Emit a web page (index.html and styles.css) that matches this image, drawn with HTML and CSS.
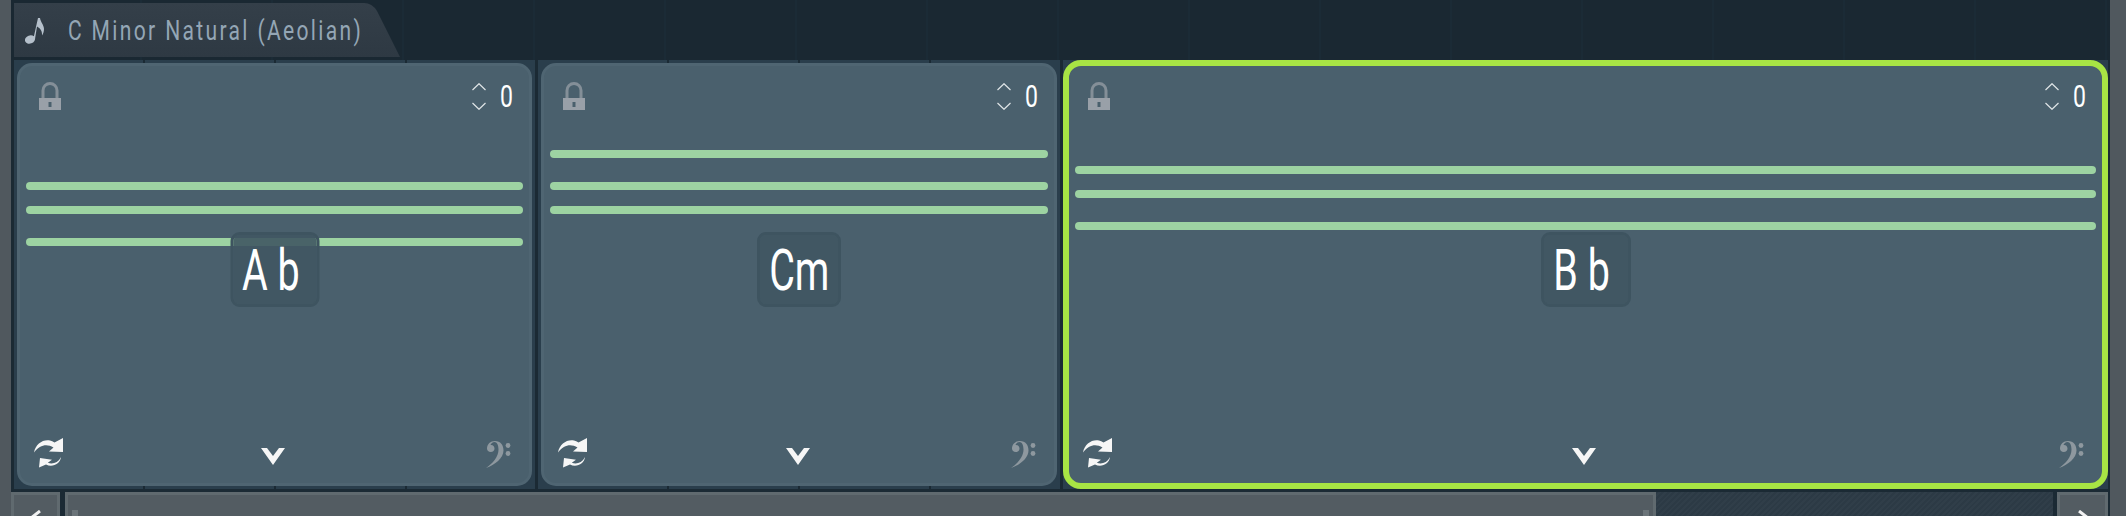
FILE: index.html
```html
<!DOCTYPE html>
<html lang="en">
<head>
<meta charset="utf-8">
<title>C Minor Natural (Aeolian)</title>
<link rel="stylesheet" href="styles.css">
</head>
<body>
<svg class="defs" width="0" height="0" aria-hidden="true">
  <defs>
    <symbol id="lock" viewBox="0 0 22 29">
      <path d="M4 18V9.500a7 7 0 0 1 14 0V18" fill="none" stroke="#848f98" stroke-width="3"/>
      <path d="M0 17H22V29H0ZM9.500 21V26H12.500V21Z" fill="#99a0a8" fill-rule="evenodd"/>
    </symbol>
    <symbol id="updown" viewBox="0 0 14 27">
      <path d="M0.500 7 7 0.700 13.500 7M0.500 20 7 26.300 13.500 20" fill="none" stroke="#dfe4e6" stroke-width="1.200"/>
    </symbol>
    <symbol id="refresh" viewBox="0 0 30 30">
      <path d="M0 14.500C1.500 6 9 1 16 2.500 17.500 2.800 19 3.500 20.500 4.500L29 0V14L15 13.500 19.500 9.500C13 5.500 6 6.500 0 14.500Z" fill="#f6f6f6"/>
      <path d="M27 19C26.500 25.500 18.500 30 12 26.500L5 29.500 6 20 18 21.800 13.800 24.800C18.500 26.500 24 25 27 19Z" fill="#f6f6f6"/>
    </symbol>
    <symbol id="chevron" viewBox="0 0 24 17">
      <path d="M0 0H6L12 8 18 0H24L12 17Z" fill="#f6f6f6"/>
    </symbol>
    <symbol id="clef" viewBox="0 0 25 27">
      <path d="M1 7.500C1 3 4.500 0 9 0 14.500 0 17.500 4 17.500 9.500 17.500 17 9 24 0 27 6.500 22.500 12.500 16 12.500 8.500 12.500 4 11 1 8.500 1 6.500 1 5 2.500 4.500 4 6.800 3.600 8.500 5.300 8.500 7.500 8.500 9.600 7 11 4.800 11 2.600 11 1 9.600 1 7.500Z" fill="#8e989f"/>
      <circle cx="22" cy="4.500" r="2.400" fill="#8e989f"/>
      <circle cx="22" cy="12.500" r="2.400" fill="#8e989f"/>
    </symbol>
  </defs>
</svg>
<div class="app">
  <header class="header">
    <div class="tab">
      <svg class="note" width="20" height="26" viewBox="0 0 20 26" aria-hidden="true">
        <ellipse cx="5" cy="21.500" rx="5.200" ry="4" transform="rotate(-20 5 21.500)" fill="#b5c0cb"/>
        <path d="M8.500 20 13 0H15C15.500 4 19 7 19 11 19 14 18 16 17 17.500 17.500 13 15 10 12 8.500L10 21Z" fill="#b5c0cb"/>
      </svg>
      <span class="tab-title">C Minor Natural (Aeolian)</span>
    </div>
  </header>
  <main class="bars">
    <section class="bar bar-first">
      <article class="card">
        <div class="card-top">
          <svg class="ico-lock"><use href="#lock"/></svg>
          <div class="transpose"><svg class="ico-updown"><use href="#updown"/></svg><span class="transpose-value">0</span></div>
        </div>
        <div class="staff staff-ab">
          <div class="note-line"></div><div class="note-line gap-s"></div><div class="note-line gap-l"></div>
        </div>
        <div class="chord chord-ab"><span class="chord-text">A b</span></div>
        <div class="card-bottom">
          <svg class="ico-refresh"><use href="#refresh"/></svg>
          <svg class="ico-chevron"><use href="#chevron"/></svg>
          <svg class="ico-clef"><use href="#clef"/></svg>
        </div>
      </article>
    </section>
    <section class="bar bar-second">
      <article class="card">
        <div class="card-top">
          <svg class="ico-lock"><use href="#lock"/></svg>
          <div class="transpose"><svg class="ico-updown"><use href="#updown"/></svg><span class="transpose-value">0</span></div>
        </div>
        <div class="staff staff-cm">
          <div class="note-line"></div><div class="note-line gap-l"></div><div class="note-line gap-s"></div>
        </div>
        <div class="chord chord-cm"><span class="chord-text">Cm</span></div>
        <div class="card-bottom">
          <svg class="ico-refresh"><use href="#refresh"/></svg>
          <svg class="ico-chevron"><use href="#chevron"/></svg>
          <svg class="ico-clef"><use href="#clef"/></svg>
        </div>
      </article>
    </section>
    <section class="bar bar-selected">
      <article class="card card-selected">
        <div class="card-top">
          <svg class="ico-lock"><use href="#lock"/></svg>
          <div class="transpose"><svg class="ico-updown"><use href="#updown"/></svg><span class="transpose-value">0</span></div>
        </div>
        <div class="staff staff-bb">
          <div class="note-line"></div><div class="note-line gap-s"></div><div class="note-line gap-l"></div>
        </div>
        <div class="chord chord-bb"><span class="chord-text">B b</span></div>
        <div class="card-bottom">
          <svg class="ico-refresh"><use href="#refresh"/></svg>
          <svg class="ico-chevron"><use href="#chevron"/></svg>
          <svg class="ico-clef"><use href="#clef"/></svg>
        </div>
      </article>
    </section>
  </main>
  <footer class="scroll">
    <div class="scroll-btn">
      <svg class="scroll-arrow" width="14" height="14" viewBox="0 0 14 14" aria-hidden="true"><path d="M11 1 2 8 11 15" fill="none" stroke="#f2f2f2" stroke-width="3"/></svg>
    </div>
    <div class="scroll-thumb"><i class="grip"></i><i class="grip"></i></div>
    <div class="scroll-track"></div>
    <div class="scroll-btn scroll-btn-end">
      <svg class="scroll-arrow" width="14" height="14" viewBox="0 0 14 14" aria-hidden="true"><path d="M3 1 12 8 3 15" fill="none" stroke="#f2f2f2" stroke-width="3"/></svg>
    </div>
  </footer>
</div>
</body>
</html>
```
FILE: styles.css
```css
* { box-sizing: border-box; }
html, body { margin: 0; padding: 0; }
body {
  width: 2126px;
  height: 516px;
  overflow: hidden;
  background: #50585e;
  font-family: Roboto, "Liberation Sans", sans-serif;
}
.defs { position: absolute; }
.app {
  margin-left: 11px;
  width: 2099px;
  height: 516px;
  background: #1b2a34;
  display: flex;
  flex-direction: column;
}
.header {
  height: 60px;
  padding: 3px 0 3px 3px;
  flex: none;
  background: repeating-linear-gradient(90deg, #1a2832 0 129px, #1b2b36 129px 131px);
}
.tab {
  width: 386px;
  height: 54px;
  background: linear-gradient(#343f49, #2e3943);
  clip-path: path("M0 0H350Q358 0 363 8L386 54H0Z");
  display: flex;
  align-items: center;
  padding-left: 11px;
}
.note { flex: none; margin-top: 2px; }
.tab-title {
  flex: none;
  margin-left: 23px;
  margin-top: 2px;
  font-size: 27px;
  letter-spacing: 3px;
  color: #94a6b5;
  white-space: nowrap;
  transform: scaleX(0.78);
  transform-origin: left center;
}
.bars {
  height: 429px;
  flex: none;
  padding-left: 3px;
  display: flex;
}
.bar {
  flex: none;
  padding: 3px;
  display: flex;
  background: repeating-linear-gradient(90deg, #2a3e4c 0 129px, #1b2a34 129px 131px);
}
.bar-first { width: 521px; }
.bar-second { width: 522px; margin-left: 3px; }
.bar-selected { width: 1045px; margin-left: 3px; padding: 0; }
.card {
  position: relative;
  flex: 1;
  display: flex;
  flex-direction: column;
  background: #4a606d;
  border: 3px solid #4f6572;
  border-radius: 15px;
}
.card-selected {
  border: 6px solid #a8e444;
  border-radius: 18px;
}
.card-top {
  display: flex;
  justify-content: space-between;
  padding: 15px 16px 0 19px;
  height: 44px;
  flex: none;
}
.ico-lock { width: 22px; height: 29px; }
.transpose { display: flex; align-items: flex-start; gap: 14px; }
.ico-updown { width: 14px; height: 27px; margin-top: 2px; }
.transpose-value {
  font-size: 32px;
  line-height: 29px;
  color: #fff;
  margin-top: 1px;
  width: 13px;
  transform: scaleX(0.72);
  transform-origin: left center;
}
.staff { padding: 0 6px; flex: none; }
.staff-ab { margin-top: 72px; }
.staff-cm { margin-top: 40px; }
.staff-bb { margin-top: 56px; }
.note-line {
  height: 8px;
  border-radius: 4px;
  background: #9dd3a2;
}
.gap-s { margin-top: 16px; }
.gap-l { margin-top: 24px; }
.chord {
  position: absolute;
  top: 166px;
  left: 50%;
  transform: translateX(-50%);
  height: 75px;
  display: flex;
  align-items: center;
  justify-content: center;
  border: 3px solid #3e5460;
  border-radius: 9px;
  background: rgba(64, 86, 98, 0.9);
  background-clip: padding-box;
  color: #fff;
  white-space: nowrap;
}
.chord-ab { width: 89px; padding-right: 8px; }
.chord-cm { width: 84px; }
.chord-bb { width: 90px; padding-right: 8px; }
.chord-text {
  flex: none;
  font-size: 58px;
  line-height: 1;
  transform: scaleX(0.68);
}
.card-bottom {
  margin-top: auto;
  padding: 0 16px 15px 14px;
  display: grid;
  grid-template-columns: 1fr auto 1fr;
  align-items: end;
  flex: none;
}
.ico-refresh { width: 30px; height: 30px; }
.ico-chevron { width: 24px; height: 17px; margin: 0 1px 3px 0; }
.ico-clef { width: 25px; height: 27px; justify-self: end; margin-right: 2px; }
.scroll {
  margin-top: 3px;
  flex: 1;
  display: flex;
  align-items: flex-start;
  overflow: hidden;
}
.scroll-btn {
  flex: none;
  width: 49px;
  height: 40px;
  background: #535c62;
  border: 3px solid #606a6f;
  display: flex;
  justify-content: center;
  padding-top: 15px;
}
.scroll-btn-end { margin: 0 2px 0 4px; width: 51px; }
.scroll-arrow { flex: none; }
.scroll-thumb {
  margin-left: 5px;
  width: 1591px;
  height: 40px;
  flex: none;
  background: #535c62;
  border: 3px solid #606a6f;
  display: flex;
  justify-content: space-between;
  padding: 15px 4px 0;
}
.grip { width: 6px; height: 10px; background: #6b7479; }
.scroll-track {
  flex: 1;
  height: 40px;
  background: repeating-linear-gradient(135deg, #2c3a45 0 2px, #303e49 2px 4px);
}
```
